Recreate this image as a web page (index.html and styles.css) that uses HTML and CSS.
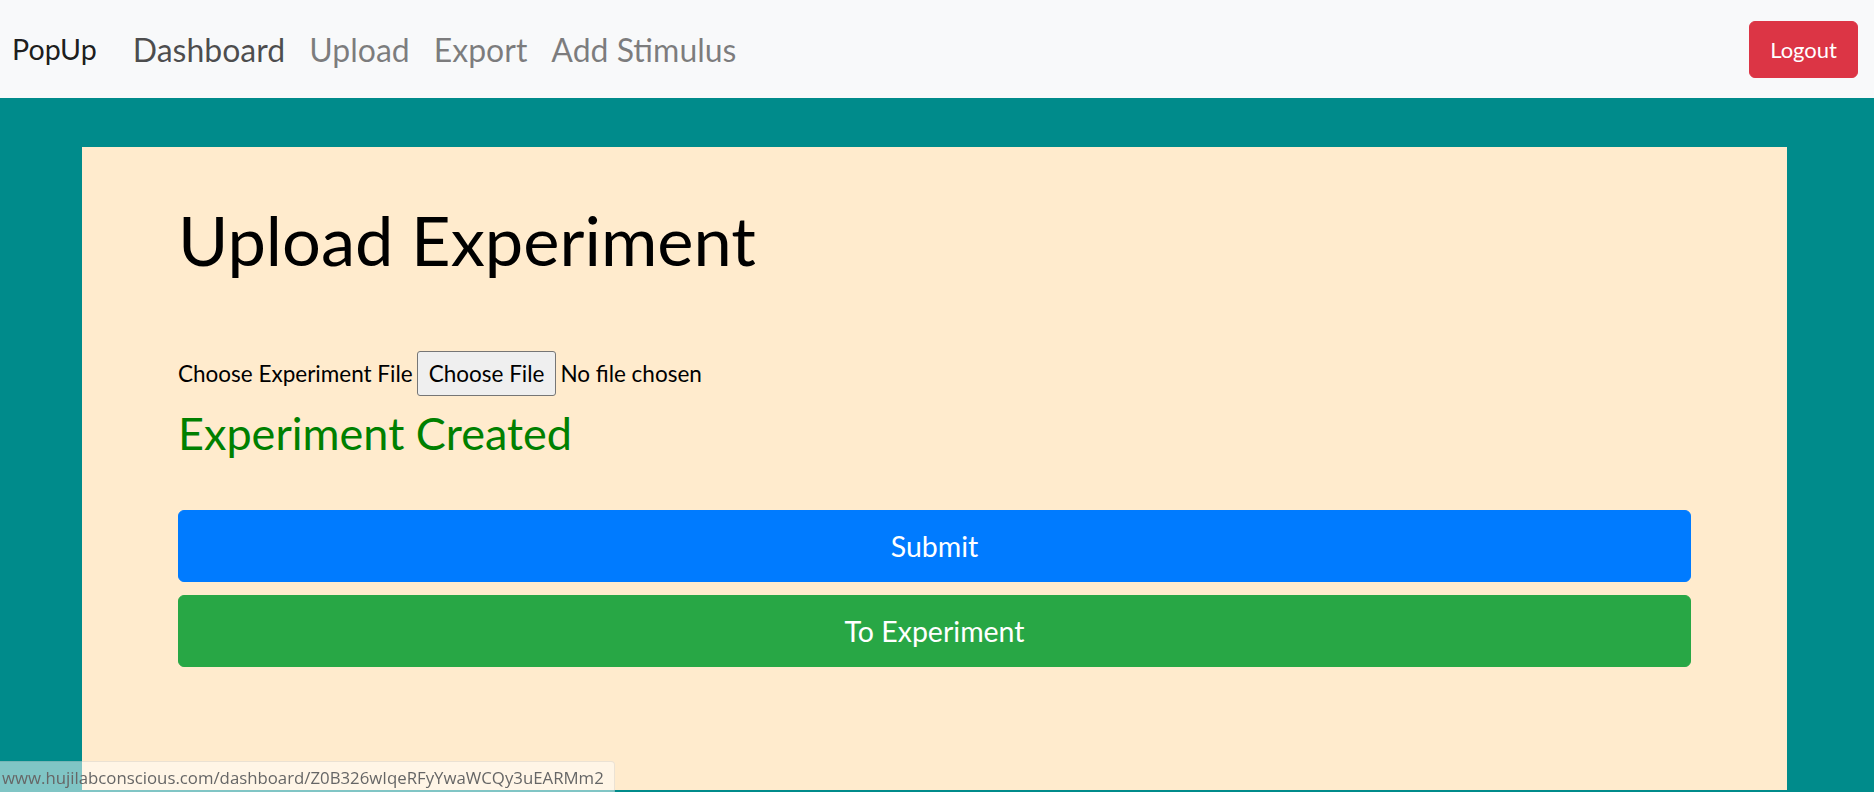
FILE: index.html
```html
<!DOCTYPE html>
<html lang="en">
<head>
<meta charset="utf-8">
<title>PopUp - Upload Experiment</title>
<link rel="stylesheet" href="styles.css">
</head>
<body>
<nav class="navbar">
  <a class="brand" href="#">PopUp</a>
  <ul class="nav-links">
    <li><a class="nav-link active" href="#">Dashboard</a></li>
    <li><a class="nav-link" href="#">Upload</a></li>
    <li><a class="nav-link" href="#">Export</a></li>
    <li><a class="nav-link" href="#">Add Stimulus</a></li>
  </ul>
  <button class="btn-logout" type="button">Logout</button>
</nav>
<main class="page">
  <section class="card">
    <h1 class="title">Upload Experiment</h1>
    <form class="upload-form">
      <div class="file-row">
        <label for="file">Choose Experiment File</label>
        <input id="file" class="file-input" type="file">
      </div>
      <p class="status">Experiment Created</p>
      <button class="btn btn-submit" type="button">Submit</button>
      <button class="btn btn-go" type="button">To Experiment</button>
    </form>
  </section>
</main>
<div class="status-bubble">www.hujilabconscious.com/dashboard/Z0B326wIqeRFyYwaWCQy3uEARMm2</div>
</body>
</html>
```
FILE: styles.css
```css
* { box-sizing: border-box; }
html, body { margin: 0; padding: 0; }
body {
  font-family: Lato, "Liberation Sans", sans-serif;
  font-size: 22.5px;
  color: #000;
  background: #008b8b;
  height: 792px;
  overflow: hidden;
}
.navbar {
  height: 98px;
  background: #f8f9fa;
  display: flex;
  align-items: center;
  padding: 0 16px 0 12px;
}
.brand {
  font-size: 28.6px;
  color: rgba(0,0,0,.9);
  text-decoration: none;
  margin-right: 24px;
}
.nav-links {
  display: flex;
  list-style: none;
  margin: 0;
  padding: 0;
  flex: 1;
}
.nav-link {
  display: block;
  padding: 0 12px;
  font-size: 32px;
  color: rgba(0,0,0,.5);
  text-decoration: none;
}
.nav-link.active { color: rgba(0,0,0,.7); }
.btn-logout {
  font-family: inherit;
  font-size: 22px;
  line-height: 35px;
  padding: 10px 20px;
  color: #fff;
  background: #dc3545;
  border: 1px solid #dc3545;
  border-radius: 6px;
}
.page {
  padding: 49px 87px 0 82px;
}
.card {
  background: #ffebcd;
  padding: 52px 96px 123px;
}
.title {
  font-size: 68.6px;
  font-weight: 400;
  line-height: 1.2;
  margin: 0 0 70px;
}
.upload-form { display: flex; flex-direction: column; }
.file-row {
  display: flex;
  align-items: center;
  gap: 4px;
}
.file-input {
  font-family: inherit;
  font-size: 22.5px;
  color: #000;
}
.file-input::file-selector-button {
  font-family: inherit;
  font-size: 22.5px;
  height: 45px;
  padding: 0 11px;
  margin-right: 4px;
  background: #efefef;
  border: 1px solid #767676;
  border-radius: 3px;
  color: #000;
}
.status {
  color: #008000;
  font-size: 45px;
  line-height: 1.2;
  margin: 10px 0 50px;
}
.btn {
  font-family: inherit;
  font-size: 28.5px;
  line-height: 44px;
  padding: 13px 16px;
  color: #fff;
  border-radius: 6px;
  width: 100%;
}
.btn-submit { background: #007bff; border: 1px solid #007bff; }
.btn-go { background: #28a745; border: 1px solid #28a745; margin-top: 13px; }
.status-bubble {
  position: fixed;
  left: 0;
  bottom: 0;
  height: 31px;
  padding: 4px 10px 0 2px;
  font-family: "Open Sans", sans-serif;
  font-size: 16.8px;
  color: #666;
  background: rgba(255,255,255,.5);
  border-top: 1px solid rgba(0,0,0,.08);
  border-right: 1px solid rgba(0,0,0,.08);
  border-top-right-radius: 4px;
}
```
